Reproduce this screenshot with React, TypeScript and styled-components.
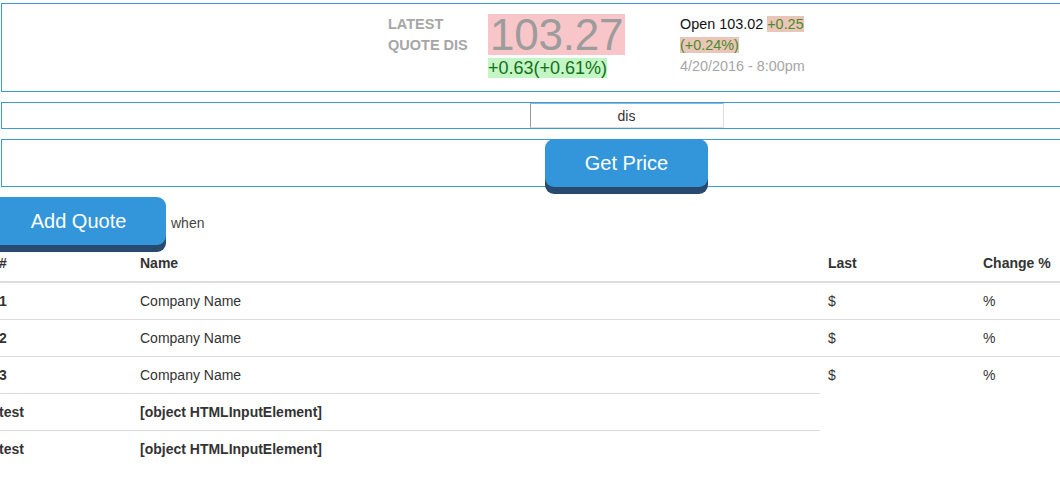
import React from "react";
import styled, { createGlobalStyle } from "styled-components";

const Global = createGlobalStyle`
  html, body {
    margin: 0;
    padding: 0;
    overflow: hidden;
    background: #fff;
  }
  body {
    font-family: "Liberation Sans", Arial, Helvetica, sans-serif;
    font-size: 14px;
    line-height: 20px;
    color: #333;
  }
  * { box-sizing: border-box; }
`;

const Page = styled.div`
  width: 1260px;
  padding-top: 3px;
`;

const Panel = styled.div<{ $h: number }>`
  margin: 0 0 10px 1px;
  width: 1251px;
  height: ${(p) => p.$h}px;
  border: 1px solid #3b9bd6;
`;

const QuotePanel = styled(Panel)`
  display: flex;
  align-items: flex-start;
  padding: 10px 0 0 386px;
`;

const Label = styled.div`
  width: 100px;
  font-weight: bold;
  font-size: 14.5px;
  line-height: 21px;
  color: #a6a6a6;
  text-transform: uppercase;
`;

const PriceCol = styled.div`
  width: 192px;
  display: flex;
  flex-direction: column;
  align-items: flex-start;
`;

const Price = styled.div`
  height: 41px;
  line-height: 42px;
  font-size: 44px;
  padding: 0 2px;
  color: #9c9c9c;
  background: #f8c6c9;
  letter-spacing: -0.2px;
`;

const Change = styled.span`
  margin-top: 3px;
  font-size: 18px;
  line-height: 20px;
  color: #12701a;
  background: #c4f5c4;
`;

const InfoCol = styled.div`
  font-size: 14.4px;
  line-height: 21px;
  color: #111;
  width: 130px;
`;

const Delta = styled.span`
  color: #4d8a2c;
  background: #e9c6b8;
`;

const Muted = styled.div`
  color: #a6a6a6;
`;

const CenterPanel = styled(Panel)`
  display: flex;
  justify-content: center;
  align-items: flex-start;
`;

const SymbolInput = styled.input`
  width: 194px;
  height: 25px;
  padding: 0;
  margin: 0;
  font-family: "Liberation Sans", Arial, sans-serif;
  font-size: 14px;
  color: #333;
  text-align: center;
  border-style: solid;
  border-width: 1px;
  border-color: #8fb6d6 #dcdcdc #dcdcdc #9a9a9a;
  background: #fff;
  outline: none;
`;

const Button = styled.button<{ $w: number }>`
  position: relative;
  width: ${(p) => p.$w}px;
  height: 48px;
  padding: 0;
  border: none;
  border-radius: 9px;
  background: #3496da;
  box-shadow: 0 7px 0 #284a6e;
  color: #fff;
  font-family: "Liberation Sans", Arial, sans-serif;
  font-size: 20px;
  line-height: 48px;
  cursor: pointer;
  flex-shrink: 0;
`;

const PriceButton = styled(Button)`
  margin-top: -1px;
`;

const Main = styled.div`
  margin-left: -9px;
`;

const AddRow = styled.div`
  display: flex;
  align-items: center;
  height: 48px;
  gap: 5px;
`;

const When = styled.span`
  margin-top: 3px;
  font-size: 14px;
  color: #444;
`;

const Table = styled.table`
  width: 1261px;
  border-collapse: collapse;
  border-spacing: 0;
  table-layout: fixed;
`;

const Th = styled.th<{ $w?: number }>`
  width: ${(p) => (p.$w ? `${p.$w}px` : "auto")};
  padding: 8px;
  text-align: left;
  font-weight: bold;
  line-height: 20px;
  color: #333;
  border-bottom: 2px solid #dddddd;
`;

const Td = styled.td<{ $bold?: boolean }>`
  padding: 8px;
  line-height: 20px;
  border-top: 1px solid #dddddd;
  font-weight: ${(p) => (p.$bold ? "bold" : "normal")};
  color: #333;
  white-space: nowrap;
`;

const rows = [
  { n: "1", name: "Company Name", last: "$", ch: "%" },
  { n: "2", name: "Company Name", last: "$", ch: "%" },
  { n: "3", name: "Company Name", last: "$", ch: "%" },
];

export default function App() {
  return (
    <>
      <Global />
      <Page>
        <QuotePanel $h={89}>
          <Label>
            Latest
            <br />
            Quote DIS
          </Label>
          <PriceCol>
            <Price>103.27</Price>
            <Change>+0.63(+0.61%)</Change>
          </PriceCol>
          <InfoCol>
            Open 103.02 <Delta>+0.25 (+0.24%)</Delta>
            <Muted>4/20/2016 - 8:00pm</Muted>
          </InfoCol>
        </QuotePanel>
        <CenterPanel $h={27}>
          <SymbolInput defaultValue="dis" />
        </CenterPanel>
        <CenterPanel $h={48}>
          <PriceButton $w={163}>Get Price</PriceButton>
        </CenterPanel>
        <Main>
          <AddRow>
            <Button $w={175}>Add Quote</Button>
            <When>when</When>
          </AddRow>
          <Table>
            <thead>
              <tr>
                <Th $w={141}>#</Th>
                <Th $w={688}>Name</Th>
                <Th $w={155}>Last</Th>
                <Th>Change %</Th>
              </tr>
            </thead>
            <tbody>
              {rows.map((r) => (
                <tr key={r.n}>
                  <Td $bold>{r.n}</Td>
                  <Td>{r.name}</Td>
                  <Td>{r.last}</Td>
                  <Td>{r.ch}</Td>
                </tr>
              ))}
              <tr>
                <Td $bold>test</Td>
                <Td $bold>[object HTMLInputElement]</Td>
              </tr>
              <tr>
                <Td $bold>test</Td>
                <Td $bold>[object HTMLInputElement]</Td>
              </tr>
            </tbody>
          </Table>
        </Main>
      </Page>
    </>
  );
}
